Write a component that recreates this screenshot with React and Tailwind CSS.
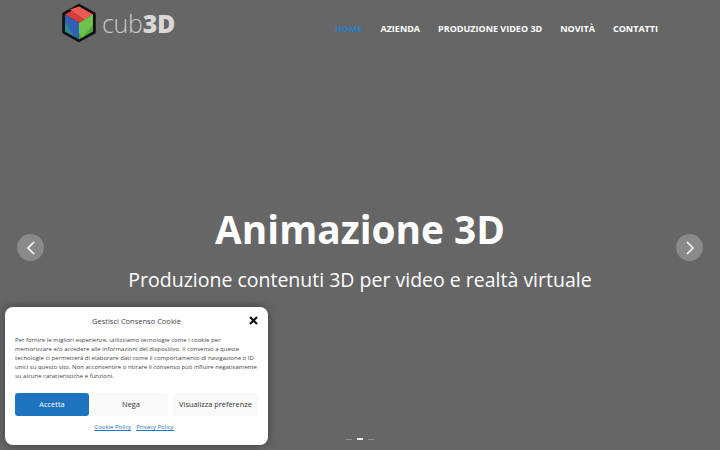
import React from "react";

const font = { fontFamily: '"Open Sans", sans-serif' };

function Logo() {
  return (
    <div className="flex items-center gap-[5px]">
      <svg width="36" height="40" viewBox="0 0 36 40" className="block">
        <polygon points="18,2 33.5,10.5 33.5,29.5 18,38 2.5,29.5 2.5,10.5" fill="#111" stroke="#111" strokeWidth="2.5" strokeLinejoin="round" />
        <polygon points="18,3.5 32,11.5 18,20 4,11.5" fill="#d63c3c" />
        <polygon points="18,3.5 32,11.5 24,16.5 9,6.5" fill="#ee5a55" />
        <polygon points="4,11.5 18,20 18,36.5 4,28.5" fill="#2f62b5" />
        <polygon points="4,19 13,33.5 4,28.5" fill="#2a8a8c" />
        <polygon points="32,11.5 18,20 18,36.5 32,28.5" fill="#4ea53f" />
        <polygon points="32,11.5 32,22 21,34.5 18,30 18,20" fill="#6cc24a" />
      </svg>
      <div className="flex items-baseline text-[25px] leading-none tracking-[-0.3px] mt-[1px] text-[#c9c9c9]">
        <span className="font-light">cub</span>
        <span className="font-extrabold text-[#d8d8d8]">3D</span>
      </div>
    </div>
  );
}

function Arrow({ dir }) {
  return (
    <div className="w-[27px] h-[27px] rounded-full bg-[#8a8a8a] flex items-center justify-center">
      <svg width="12" height="16" viewBox="0 0 12 16" fill="none" stroke="#fff" strokeWidth="1.6">
        {dir === "l" ? <path d="M9 2 L3 8 L9 14" /> : <path d="M4 2 L10 8 L4 14" />}
      </svg>
    </div>
  );
}

export default function App() {
  return (
    <div style={font} className="relative w-[720px] h-[450px] overflow-hidden bg-[#666666] flex flex-col text-white">
      <header className="flex items-start justify-between pl-[61px] pr-[62px] h-[46px] pt-[3px]">
        <Logo />
        <nav className="flex gap-[18px] text-[9px] font-bold uppercase pt-[17px] leading-[18px]">
          <span className="text-[#2f7cc0]">Home</span>
          <span>Azienda</span>
          <span>Produzione video 3D</span>
          <span>Novità</span>
          <span>Contatti</span>
        </nav>
      </header>

      <main className="flex-1 flex items-start justify-between pl-[17px] pr-[17px] pt-[188px]">
        <Arrow dir="l" />
        <div className="flex flex-col items-center -mt-[30px]">
          <h1 className="text-[38.8px] font-bold leading-[50px]">Animazione 3D</h1>
          <p className="text-[19.5px] leading-[28px] mt-[12px]">Produzione contenuti 3D per video e realtà virtuale</p>
        </div>
        <Arrow dir="r" />
      </main>

      <div className="absolute left-[346px] bottom-[10px] flex items-center gap-[5px]">
        <div className="w-[6px] h-[1px] bg-[#8f8f8f]" />
        <div className="w-[6px] h-[2px] bg-[#e8e8e8]" />
        <div className="w-[6px] h-[1px] bg-[#8f8f8f]" />
      </div>

      <div className="absolute left-[5px] top-[307px] w-[263px] h-[138px] bg-white rounded-[8px] shadow-[0_0_10px_rgba(0,0,0,0.4)] text-[#333] px-[10px] flex flex-col">
        <div className="relative h-[27px] mt-[1px] flex items-center justify-center text-[7.5px] leading-none text-[#444]">
          Gestisci Consenso Cookie
          <svg className="absolute right-[0px] top-[8px]" width="9" height="9" viewBox="0 0 9 9" stroke="#111" strokeWidth="2.2">
            <path d="M1 1 L8 8 M8 1 L1 8" />
          </svg>
        </div>
        <p className="text-[6px] leading-[9px] mt-[1px] whitespace-nowrap text-[#444]">
          Per fornire le migliori esperienze, utilizziamo tecnologie come i cookie per<br />
          memorizzare e/o accedere alle informazioni del dispositivo. Il consenso a queste<br />
          tecnologie ci permetterà di elaborare dati come il comportamento di navigazione o ID<br />
          unici su questo sito. Non acconsentire o ritirare il consenso può influire negativamente<br />
          su alcune caratteristiche e funzioni.
        </p>
        <div className="flex gap-[5px] mt-[12px] text-[7.4px]">
          <div className="w-[74px] h-[23px] rounded-[3px] bg-[#1e73be] text-white flex items-center justify-center">Accetta</div>
          <div className="w-[74px] h-[23px] rounded-[3px] bg-[#f9f9f9] text-[#333] flex items-center justify-center">Nega</div>
          <div className="w-[85px] h-[23px] rounded-[3px] bg-[#f9f9f9] text-[#333] flex items-center justify-center">Visualizza preferenze</div>
        </div>
        <div className="flex justify-center gap-[5px] mt-[5px] pr-[5px] text-[6px] leading-[12px] text-[#1e73be] underline">
          <span>Cookie Policy</span>
          <span>Privacy Policy</span>
        </div>
      </div>
    </div>
  );
}
